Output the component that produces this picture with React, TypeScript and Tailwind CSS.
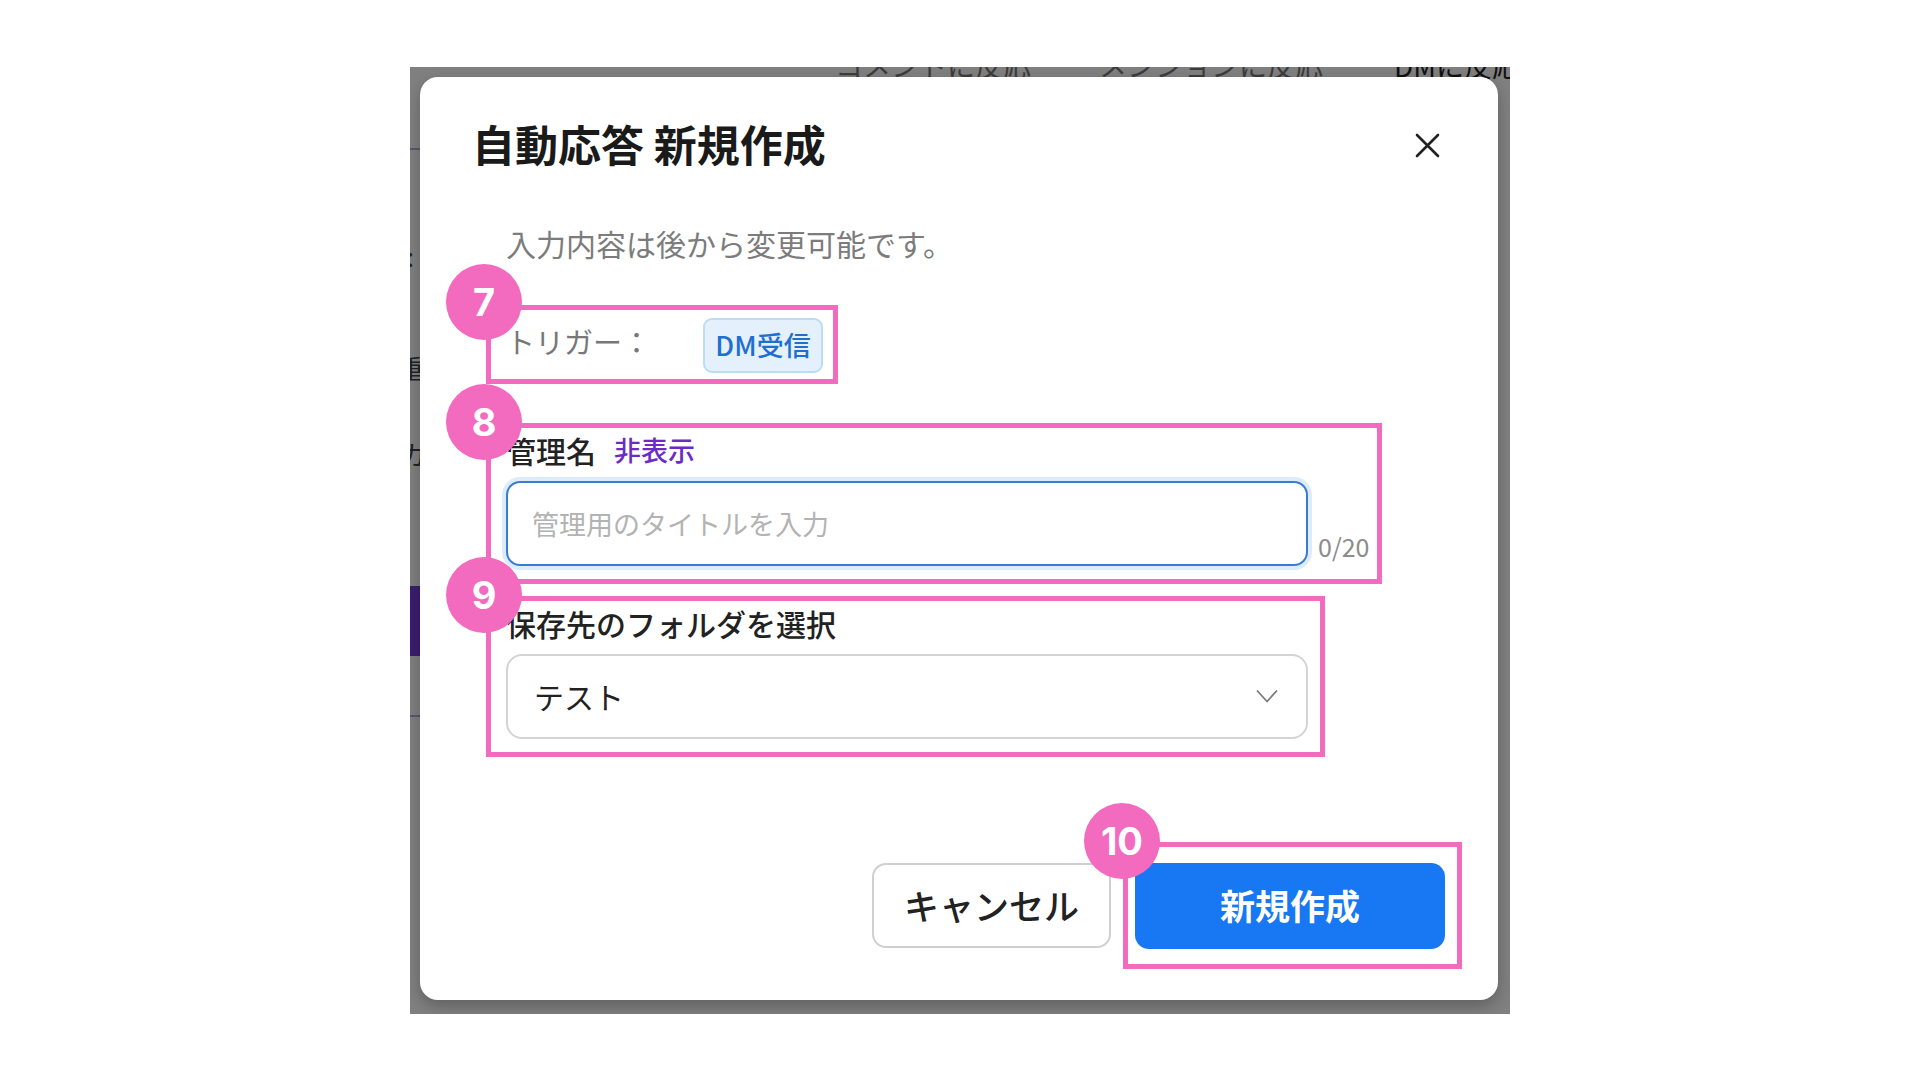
import { ReactNode } from 'react';

function Marker({ n, className }: { n: string; className: string }) {
  return (
    <div
      className={`pointer-events-none absolute z-20 flex h-[76px] w-[76px] items-center justify-center rounded-full bg-[#f36bbf] font-['Inter','Noto_Sans',sans-serif] text-[38px] font-bold leading-none text-white ${className}`}
    >
      {n}
    </div>
  );
}

function Frame({ className }: { className: string }) {
  return <div className={`pointer-events-none absolute z-10 border-[5px] border-[#f36bbf] ${className}`} />;
}

function Field({ label, extra, children }: { label: string; extra?: ReactNode; children: ReactNode }) {
  return (
    <>
      <div className="flex h-[40px] items-center gap-[18px]">
        <span className="text-[30px] font-medium leading-[40px] text-[#222]">{label}</span>
        {extra}
      </div>
      <div className="mt-[11px]">{children}</div>
    </>
  );
}

export default function App() {
  return (
    <div className="flex h-screen w-full items-center justify-center bg-white font-['Noto_Sans_CJK_JP','Noto_Sans',sans-serif]">
      {/* dimmed screen behind the dialog */}
      <div className="relative h-[947px] w-[1100px] overflow-hidden bg-[#808080]">
        <div className="flex h-full flex-col">
          <div className="-mt-[18px] flex h-[32px] items-start whitespace-nowrap pl-[425px] text-[28px] leading-[32px] text-[#3d3d3d]">
            <span>コメントに反応</span>
            <span className="ml-[68px]">メンションに反応</span>
            <span className="ml-[38px] h-[32px] w-[2px] bg-[#6a6a6a]" />
            <span className="ml-[33px] text-[#111]">DMに反応</span>
          </div>
          <div className="flex w-[10px] flex-col overflow-hidden text-[26px] leading-[30px] text-[#222]">
            <div className="mt-[67px] h-[2px] w-full bg-[#5c5470]" />
            <div className="mt-[91px] flex justify-end whitespace-nowrap pr-[6px]">設定:</div>
            <div className="mt-[82px] flex justify-end whitespace-nowrap">
              <span className="-mr-[4px]">重</span>
            </div>
            <div className="mt-[56px] flex justify-end whitespace-nowrap">
              <span className="-mr-[6px]">カ</span>
            </div>
            <div className="mt-[117px] h-[70px] w-full bg-[#3b1e6e]" />
            <div className="mt-[59px] h-[2px] w-full bg-[#5c5470]" />
          </div>
        </div>

        {/* dialog */}
        <div className="absolute left-[10px] top-[10px] flex h-[923px] w-[1078px] flex-col rounded-[18px] bg-white shadow-[0_6px_16px_rgba(0,0,0,0.25)]">
          <div className="flex items-center justify-between pl-[52px] pr-[58px] pt-[41px]">
            <h1 className="text-[43px] font-bold leading-[50px] text-[#1a1a1a]">自動応答 新規作成</h1>
            <svg width="25" height="25" viewBox="0 0 25 25" className="mt-[6px]">
              <path d="M2 2 L23 23 M23 2 L2 23" stroke="#222" strokeWidth="2.6" strokeLinecap="round" />
            </svg>
          </div>

          <div className="flex flex-col pl-[86px]">
            <p className="mt-[55px] text-[30px] leading-[40px] text-[#7c7c7c]">入力内容は後から変更可能です。</p>

            {/* 7: trigger */}
            <div className="relative mt-[55px] flex h-[55px] w-fit items-center">
              <span className="mb-[8px] w-[197px] text-[29px] leading-[40px] text-[#777]">トリガー：</span>
              <span className="flex h-[55px] w-[120px] items-center justify-center rounded-[9px] border-2 border-[#bcdcf4] bg-[#e4f1fc] text-[27px] font-medium text-[#1f6fce]">
                DM受信
              </span>
              <Frame className="-bottom-[11px] -left-[20px] -right-[15px] -top-[13px]" />
              <Marker n="7" className="-left-[60px] -top-[54px]" />
            </div>

            {/* 8: management name */}
            <div className="relative mt-[57px] w-fit">
              <Field label="管理名" extra={<span className="text-[27px] font-medium leading-[40px] text-[#6a2cc4]">非表示</span>}>
                <div className="flex items-end gap-[10px]">
                  <input
                    readOnly
                    placeholder="管理用のタイトルを入力"
                    className="h-[85px] w-[802px] rounded-[14px] border-2 border-[#3a7bd5] bg-white pl-[24px] text-[27px] text-[#222] outline-none ring-4 ring-[#dcecfb] placeholder:text-[#b3b3b3]"
                  />
                  <span className="mb-[5px] text-[25px] leading-[30px] text-[#8c8c8c]">0/20</span>
                </div>
              </Field>
              <Frame className="-bottom-[18px] -left-[20px] -right-[13px] -top-[7px]" />
              <Marker n="8" className="-left-[60px] -top-[46px]" />
            </div>

            {/* 9: folder */}
            <div className="relative mt-[37px] w-fit">
              <Field label="保存先のフォルダを選択">
                <div className="flex h-[85px] w-[802px] items-center justify-between rounded-[16px] border-2 border-[#d4d4d4] pl-[26px] pr-[28px]">
                  <span className="text-[30px] text-[#222]">テスト</span>
                  <svg width="22" height="14" viewBox="0 0 22 14">
                    <path d="M1 1.5 L11 12.5 L21 1.5" fill="none" stroke="#7a7a7a" strokeWidth="1.8" strokeLinejoin="round" />
                  </svg>
                </div>
              </Field>
              <Frame className="-bottom-[18px] -left-[20px] -right-[17px] -top-[7px]" />
              <Marker n="9" className="-left-[60px] -top-[46px]" />
            </div>
          </div>

          <div className="mt-[124px] flex items-center justify-end gap-[24px] pr-[53px]">
            <button className="h-[85px] w-[239px] rounded-[14px] border-2 border-[#d0d0d0] bg-white text-[35px] font-medium text-[#222]">
              キャンセル
            </button>
            {/* 10: create */}
            <div className="relative">
              <button className="h-[86px] w-[310px] rounded-[14px] bg-[#1877f2] text-[35px] font-bold text-white">新規作成</button>
              <Frame className="-bottom-[20px] -left-[12px] -right-[17px] -top-[21px]" />
              <Marker n="10" className="-left-[51px] -top-[60px]" />
            </div>
          </div>
        </div>
      </div>
    </div>
  );
}
